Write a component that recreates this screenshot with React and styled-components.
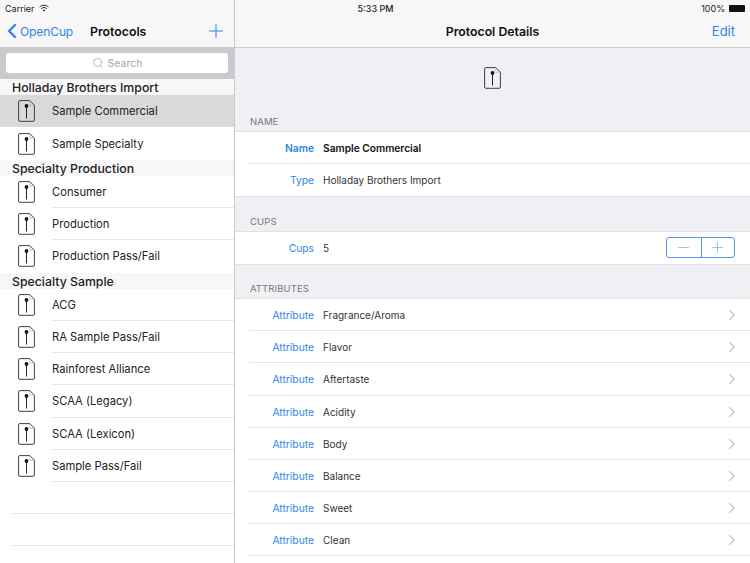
import React from 'react'
import styled, { createGlobalStyle } from 'styled-components'
import { ChevronRight, ChevronLeft, Plus, Minus, Search as SearchIcon } from 'lucide-react'

const blue = '#2e86e6'

const GlobalStyle = createGlobalStyle`
  html, body { margin: 0; padding: 0; background: #fff; }
  body { font-family: Inter, "Liberation Sans", sans-serif; color: #1c1c1e; }
`

const Screen = styled.div`
  position: relative;
  width: 750px;
  height: 563px;
  overflow: hidden;
  display: flex;
`

const StatusBar = styled.div`
  position: absolute;
  top: 0;
  left: 0;
  right: 0;
  height: 16px;
  padding: 0 4px 0 5px;
  display: grid;
  grid-template-columns: 1fr auto 1fr;
  align-items: center;
  font-size: 9px;
  color: #222;
`

const StatusSide = styled.div`
  display: flex;
  align-items: center;
  gap: 4px;
  justify-content: ${p => (p.$end ? 'flex-end' : 'flex-start')};
`

const Clock = styled.span`
  font-weight: 500;
`

const Battery = styled.span`
  display: block;
  width: 16px;
  height: 7px;
  border-radius: 1px;
  background: #111;
  margin-right: 1px;
`

const Master = styled.aside`
  width: 234px;
  height: 100%;
  flex: none;
  border-right: 1px solid #c8c8cc;
  background: #fff;
`

const Detail = styled.main`
  flex: 1;
  height: 100%;
  background: #efeff4;
`

const NavBar = styled.header`
  height: 47px;
  box-sizing: border-box;
  padding-top: 15px;
  background: #f7f7f8;
  display: grid;
  align-items: center;
`

const MasterNav = styled(NavBar)`
  grid-template-columns: 76px 1fr 40px;
`

const DetailNav = styled(NavBar)`
  height: 48px;
  border-bottom: 1px solid #cfcfd2;
  grid-template-columns: 1fr auto 1fr;
`

const BackLink = styled.span`
  display: flex;
  align-items: center;
  color: ${blue};
  font-size: 12px;
  letter-spacing: -0.1px;
`

const BackChevron = styled(ChevronLeft)`
  margin-right: -4px;
`

const NavTitle = styled.h1`
  margin: 0;
  font-size: 12.3px;
  font-weight: 600;
  color: #111;
  text-align: ${p => (p.$left ? 'left' : 'center')};
  margin-left: ${p => (p.$left ? '14px' : '0')};
`

const NavAction = styled.span`
  display: flex;
  justify-content: flex-end;
  color: ${blue};
  font-size: 13px;
  padding-right: ${p => p.$pad || 11}px;
`

const SearchBand = styled.div`
  height: 32px;
  box-sizing: border-box;
  background: #c9c9ce;
  padding: 6px;
`

const SearchField = styled.div`
  height: 20px;
  border-radius: 3px;
  background: #fff;
  display: flex;
  align-items: center;
  justify-content: center;
  gap: 4px;
  color: #a4a4a8;
  font-size: 10.5px;
`

const SectionTitle = styled.div`
  height: 16.3px;
  line-height: 17px;
  padding-left: 12px;
  background: #f7f7f7;
  font-size: 12.3px;
  font-weight: 500;
  color: #222;
`

const ProtocolRow = styled.div`
  height: 32.2px;
  display: flex;
  align-items: stretch;
  background: ${p => (p.$selected ? '#d9d9d9' : '#fff')};
`

const RowIcon = styled.div`
  width: 52px;
  flex: none;
  display: flex;
  align-items: center;
  justify-content: center;
  box-sizing: border-box;
`

const RowLabel = styled.div`
  flex: 1;
  display: flex;
  align-items: center;
  padding-top: 1px;
  font-size: 11.2px;
  color: #222;
  border-bottom: 1px solid ${p => (p.$last || p.$selected ? 'transparent' : '#e6e6e8')};
  box-sizing: border-box;
`

const EmptyRow = styled.div`
  height: 32.2px;
  box-sizing: border-box;
  margin-left: 12px;
  border-bottom: 1px solid #e6e6e8;
`

const HeroIcon = styled.div`
  height: 59px;
  display: flex;
  align-items: center;
  justify-content: center;
`

const GroupCaption = styled.div`
  height: ${p => p.$h || 25}px;
  box-sizing: border-box;
  padding: 0 0 5px 15px;
  display: flex;
  align-items: flex-end;
  font-size: 9.5px;
  letter-spacing: 0.1px;
  color: #77777c;
`

const Group = styled.section`
  background: #fff;
  box-shadow: 0 -1px 0 #e2e2e5, 0 1px 0 #e2e2e5;
`

const DetailRow = styled.div`
  height: 32.2px;
  box-sizing: border-box;
  display: flex;
  align-items: center;
  padding-top: 1px;
  margin-left: 14px;
  border-bottom: 1px solid ${p => (p.$last ? 'transparent' : '#e6e6e8')};
`

const FieldName = styled.span`
  width: 65px;
  flex: none;
  text-align: right;
  font-size: 10.3px;
  color: ${blue};
  font-weight: ${p => (p.$bold ? 600 : 400)};
`

const FieldValue = styled.span`
  flex: 1;
  margin-left: 9px;
  font-size: ${p => (p.$bold ? 10.2 : 10)}px;
  color: ${p => (p.$bold ? '#111' : '#333')};
  font-weight: ${p => (p.$bold ? 600 : 400)};
`

const Chevron = styled(ChevronRight)`
  color: #c4c4c8;
  margin-right: 9px;
`

const Stepper = styled.div`
  width: 69px;
  height: 21px;
  margin: -2px 15px 0 0;
  box-sizing: border-box;
  border: 1px solid #4f98e6;
  border-radius: 3px;
  display: grid;
  grid-template-columns: 1fr 1fr;
  color: #7fb2ea;
`

const StepButton = styled.span`
  display: flex;
  align-items: center;
  justify-content: center;
  & + & { border-left: 1px solid #4f98e6; }
`

// the cupping form glyph, page with a folded corner and a pin
const ProtocolIcon = () => (
  <svg width="17" height="22" viewBox="0 0 17 22" fill="none">
    <path d="M1.8.6h10l4.6 4.6v14.9a1.2 1.2 0 0 1-1.2 1.2H1.8A1.2 1.2 0 0 1 .6 20.1V1.8A1.2 1.2 0 0 1 1.8.6Z" stroke="#2a2a2a" strokeWidth=".9" />
    <path d="M11.8.6v4.6h4.6" stroke="#aaa" strokeWidth=".6" />
    <circle cx="8.5" cy="6" r="1.9" fill="#111" />
    <rect x="8" y="6.5" width="1" height="12" fill="#222" />
  </svg>
)

const sections = [
  { title: 'Holladay Brothers Import', rows: ['Sample Commercial', 'Sample Specialty'] },
  { title: 'Specialty Production', rows: ['Consumer', 'Production', 'Production Pass/Fail'] },
  { title: 'Specialty Sample', rows: ['ACG', 'RA Sample Pass/Fail', 'Rainforest Alliance', 'SCAA (Legacy)', 'SCAA (Lexicon)', 'Sample Pass/Fail'] },
]

const attributes = ['Fragrance/Aroma', 'Flavor', 'Aftertaste', 'Acidity', 'Body', 'Balance', 'Sweet', 'Clean']

export default function App() {
  return (
    <Screen>
      <GlobalStyle />
      <Master>
        <MasterNav>
          <BackLink><BackChevron size={24} strokeWidth={2.4} />OpenCup</BackLink>
          <NavTitle $left>Protocols</NavTitle>
          <NavAction $pad={7}><Plus size={22} strokeWidth={1.1} /></NavAction>
        </MasterNav>
        <SearchBand>
          <SearchField><SearchIcon size={12} strokeWidth={1.5} />Search</SearchField>
        </SearchBand>
        {sections.map(section => (
          <React.Fragment key={section.title}>
            <SectionTitle>{section.title}</SectionTitle>
            {section.rows.map((row, i) => (
              <ProtocolRow key={row} $selected={row === 'Sample Commercial'}>
                <RowIcon><ProtocolIcon /></RowIcon>
                <RowLabel $selected={row === 'Sample Commercial'} $last={i === section.rows.length - 1 && section.title !== 'Specialty Sample'}>{row}</RowLabel>
              </ProtocolRow>
            ))}
          </React.Fragment>
        ))}
        <EmptyRow />
        <EmptyRow />
      </Master>
      <Detail>
        <DetailNav>
          <span />
          <NavTitle>Protocol Details</NavTitle>
          <NavAction $pad={15}>Edit</NavAction>
        </DetailNav>
        <HeroIcon><ProtocolIcon /></HeroIcon>
        <GroupCaption>NAME</GroupCaption>
        <Group>
          <DetailRow>
            <FieldName $bold>Name</FieldName>
            <FieldValue $bold>Sample Commercial</FieldValue>
          </DetailRow>
          <DetailRow $last>
            <FieldName>Type</FieldName>
            <FieldValue>Holladay Brothers Import</FieldValue>
          </DetailRow>
        </Group>
        <GroupCaption $h={35.6}>CUPS</GroupCaption>
        <Group>
          <DetailRow $last>
            <FieldName>Cups</FieldName>
            <FieldValue>5</FieldValue>
            <Stepper>
              <StepButton><Minus size={17} strokeWidth={1.1} /></StepButton>
              <StepButton><Plus size={17} strokeWidth={1.1} /></StepButton>
            </Stepper>
          </DetailRow>
        </Group>
        <GroupCaption $h={34.8}>ATTRIBUTES</GroupCaption>
        <Group>
          {attributes.map(name => (
            <DetailRow key={name}>
              <FieldName>Attribute</FieldName>
              <FieldValue>{name}</FieldValue>
              <Chevron size={18} strokeWidth={1.5} />
            </DetailRow>
          ))}
          <DetailRow $last />
        </Group>
      </Detail>
      <StatusBar>
        <StatusSide>
          Carrier
          <svg width="10" height="8" viewBox="0 0 10 8" fill="none" stroke="#222">
            <path d="M.6 3C3 .7 7 .7 9.4 3M2.2 4.6c1.6-1.4 4-1.4 5.6 0" strokeWidth="1" />
            <path d="M5 7.6 3.6 6.1c.8-.6 2-.6 2.8 0L5 7.6Z" fill="#222" stroke="none" />
          </svg>
        </StatusSide>
        <Clock>5:33 PM</Clock>
        <StatusSide $end>100%<Battery /></StatusSide>
      </StatusBar>
    </Screen>
  )
}
